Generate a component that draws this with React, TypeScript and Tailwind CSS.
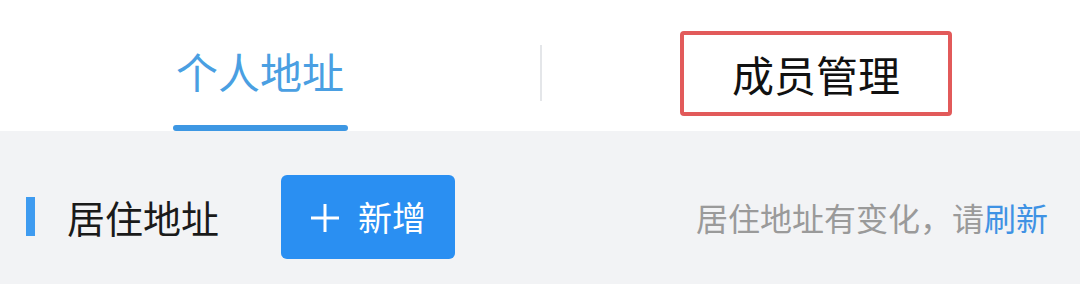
export default function App() {
  const font = { fontFamily: '"Noto Sans CJK SC", "Noto Sans", sans-serif' };
  return (
    <div className="w-[1080px] h-[284px] bg-[#f2f3f5] overflow-hidden" style={font}>
      {/* tabs */}
      <div className="relative h-[131px] bg-white flex">
        <div className="w-[540px] flex flex-col items-center pr-[20px]">
          <div className="mt-[42px] h-[58px] flex items-center text-[42px] leading-none text-[#4a9fe2]">
            个人地址
          </div>
          <div className="mt-[25px] w-[175px] h-[6px] rounded-full bg-[#3d97e3]" />
        </div>
        <div className="mt-[45px] w-[2px] h-[56px] bg-[#e4e6e9]" />
        <div className="flex-1 flex justify-center pl-[10px]">
          <div className="mt-[31px] w-[272px] h-[85px] rounded-[4px] border-[4px] border-[#e25a5a] flex items-center justify-center text-[42px] leading-none text-[#111]">
            成员管理
          </div>
        </div>
      </div>
      {/* section header */}
      <div className="h-[153px] flex items-center pl-[26px] pr-[32px] pt-[18px]">
        <div className="w-[9px] h-[39px] bg-[#3e9bf0]" />
        <div className="ml-[32px] text-[38px] leading-none text-[#1a1a1a]">居住地址</div>
        <button className="ml-[62px] w-[174px] h-[84px] rounded-[6px] bg-[#2a8ff2] flex items-center justify-center gap-[18px] text-white">
          <svg width="30" height="30" viewBox="0 0 30 30" className="mt-[2px]">
            <path d="M15 1v28M1 15h28" stroke="white" strokeWidth="3" />
          </svg>
          <span className="text-[34px] leading-none">新增</span>
        </button>
        <div className="ml-auto text-[32px] leading-none text-[#9a9a9a]">
          居住地址有变化，请<span className="text-[#3f92e4]">刷新</span>
        </div>
      </div>
    </div>
  );
}
